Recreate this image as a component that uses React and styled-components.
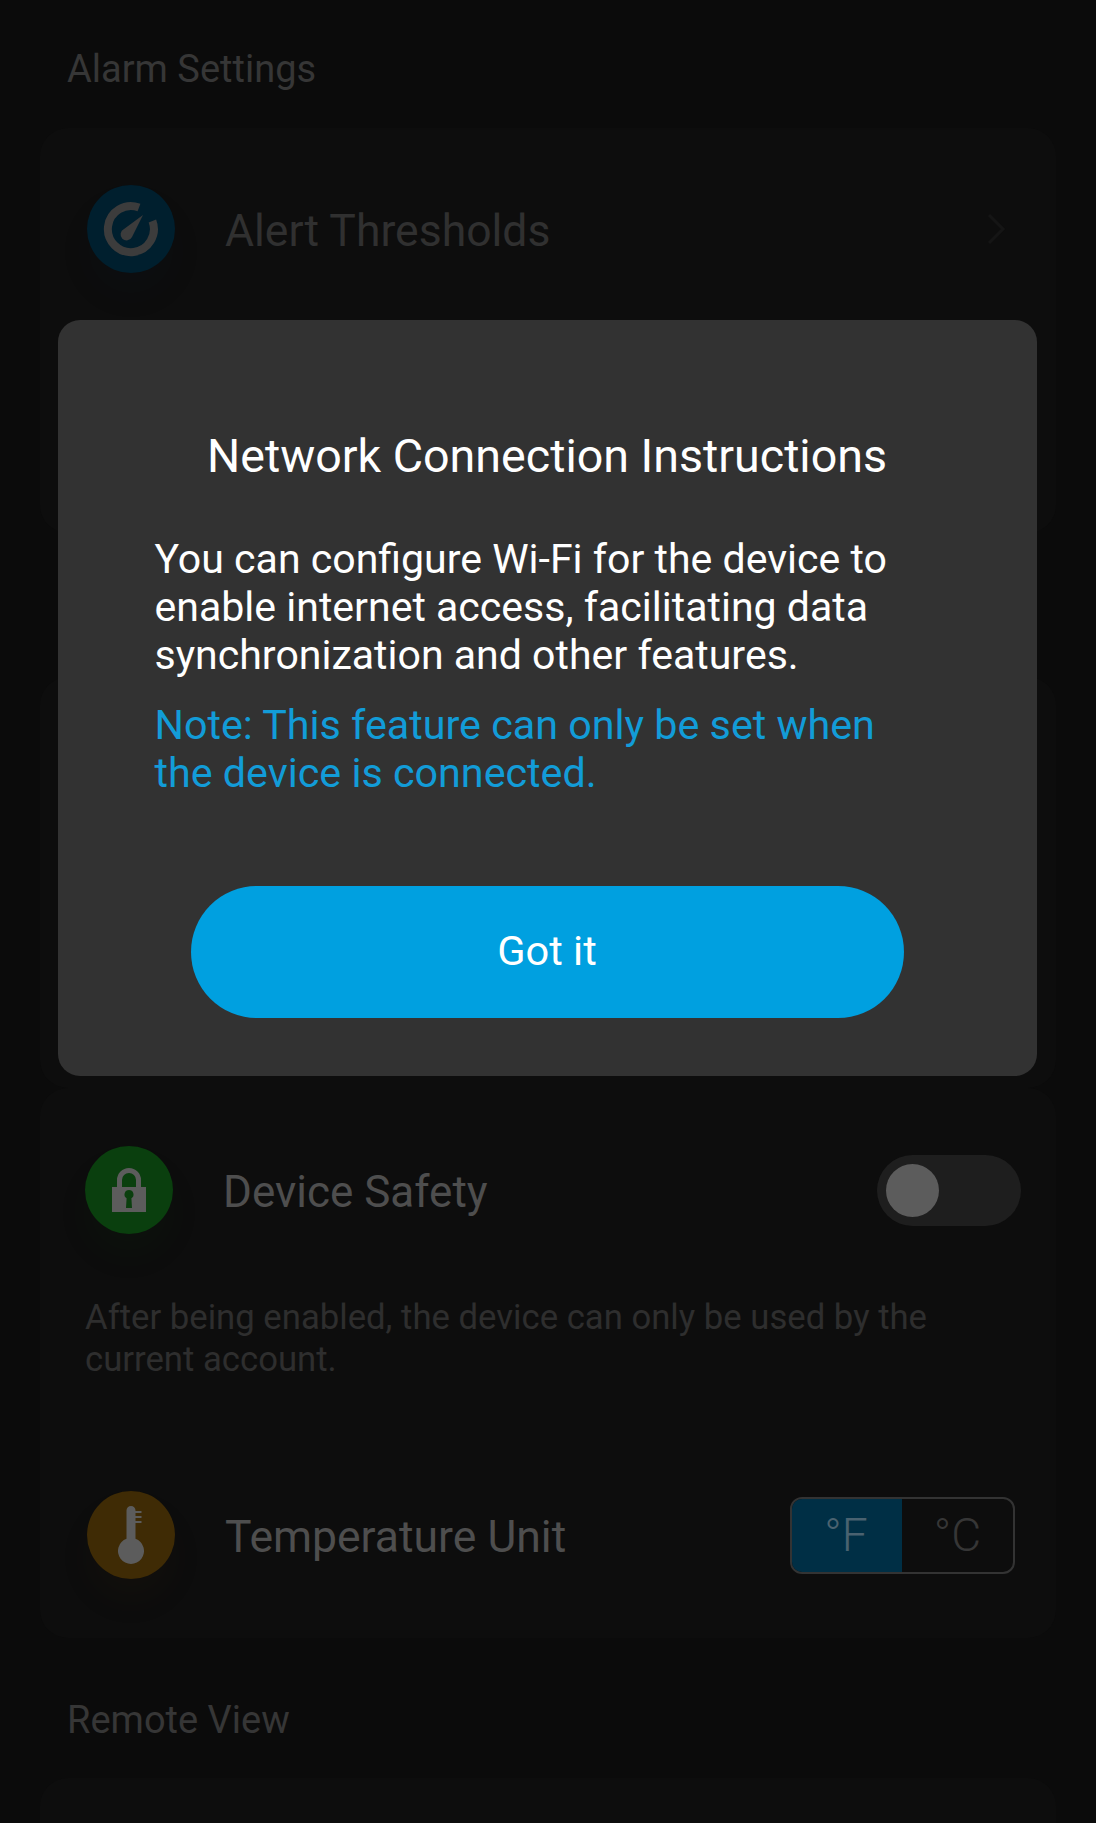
import React from "react";
import styled, { createGlobalStyle } from "styled-components";

const Global = createGlobalStyle`
  html, body { margin: 0; padding: 0; background: #0b0b0b; }
  body { font-family: Roboto, "Noto Sans", sans-serif; overflow: hidden; }
  * { box-sizing: border-box; }
`;

const Page = styled.div`
  position: relative;
  width: 1096px;
  height: 1823px;
  overflow: hidden;
  background: #0b0b0b;
  padding: 46px 40px 0;
`;

const SectionTitle = styled.div`
  font-size: 38px;
  line-height: 46px;
  color: #363636;
  padding-left: 27px;
  margin-top: ${(p) => p.$top || 0}px;
`;

const Card = styled.div`
  background: #0d0d0d;
  border-radius: 28px;
  min-height: ${(p) => p.$height}px;
  margin-top: ${(p) => p.$top || 0}px;
  padding: ${(p) => p.$pad || 0}px 48px 0 47px;
  display: flex;
  flex-direction: column;
`;

const Row = styled.div`
  display: flex;
  align-items: center;
  height: 88px;
  margin-top: ${(p) => p.$top || 0}px;
  margin-left: ${(p) => p.$shift || 0}px;
`;

const IconCircle = styled.div`
  width: 88px;
  height: 88px;
  flex: none;
  border-radius: 50%;
  background: ${(p) => p.$color};
  display: flex;
  align-items: center;
  justify-content: center;
  box-shadow: 0 22px 30px ${(p) => p.$color}14;
`;

const Label = styled.div`
  margin-left: 50px;
  padding-top: 3px;
  flex: 1;
  font-size: ${(p) => p.$size || 44.5}px;
  line-height: 50px;
  color: ${(p) => p.$color || "#4e4e4e"};
`;

const Chevron = styled.svg`
  width: 24px;
  height: 34px;
  flex: none;
`;

const Toggle = styled.div`
  width: 144px;
  height: 71px;
  flex: none;
  border-radius: 36px;
  background: #1e1e1e;
  padding: 9px;
  margin-right: -13px;
`;

const Thumb = styled.div`
  width: 53px;
  height: 53px;
  border-radius: 50%;
  background: #5c5c5c;
`;

const Hint = styled.div`
  margin: 62px 40px 0 -2px;
  font-size: 34.7px;
  line-height: 42px;
  color: #2e2e2e;
`;

const Segment = styled.div`
  display: flex;
  width: 225px;
  height: 77px;
  flex: none;
  border: 2px solid #333;
  border-radius: 12px;
  overflow: hidden;
  margin-right: -7px;
`;

const SegmentItem = styled.div`
  flex: ${(p) => (p.$active ? "0 0 112px" : "1")};
  margin: ${(p) => (p.$active ? "-2px 0 -2px -2px" : 0)};
  background: ${(p) => (p.$active ? "#002f45" : "transparent")};
  color: ${(p) => (p.$active ? "#4a6270" : "#363636")};
  display: flex;
  align-items: center;
  justify-content: center;
  font-size: 46px;
  font-weight: 300;
`;

const Overlay = styled.div`
  position: absolute;
  inset: 0;
  display: flex;
  justify-content: center;
  align-items: flex-start;
  padding: 320px 2px 0 0;
`;

const Modal = styled.div`
  width: 979px;
  height: 756px;
  border-radius: 22px;
  background: #323232;
  padding: 108px 97px 0;
  display: flex;
  flex-direction: column;
`;

const ModalTitle = styled.div`
  font-size: 46.6px;
  line-height: 56px;
  color: #fff;
  text-align: center;
  white-space: nowrap;
`;

const ModalBody = styled.div`
  margin-top: 51px;
  max-width: 760px;
  font-size: 41.05px;
  line-height: 48px;
  color: #fff;
`;

const ModalNote = styled.div`
  margin-top: 22px;
  max-width: 760px;
  font-size: 41.25px;
  line-height: 48px;
  color: #129cd8;
`;

const GotIt = styled.button`
  align-self: center;
  margin: 89px 0 0 0;
  width: 713px;
  height: 132px;
  flex: none;
  border: 0;
  padding: 0 0 4px;
  border-radius: 66px;
  background: #00a0e0;
  color: #fff;
  font-family: inherit;
  font-size: 41.5px;
`;

const Gauge = () => (
  <svg width="56" height="56" viewBox="0 0 56 56" fill="none">
    <path d="M36 6.6A23 23 0 1 0 49.4 20" stroke="#3c3c3c" strokeWidth="8" />
    <path d="M40 14 L21 28 a6 6 0 1 0 8 8 Z" fill="#3c3c3c" />
  </svg>
);

const Lock = () => (
  <svg width="40" height="48" viewBox="0 0 40 48">
    <path d="M10.5 21V14a9.5 9.5 0 0 1 19 0V21" fill="none" stroke="#5c5c5c" strokeWidth="5" />
    <path
      fillRule="evenodd"
      fill="#5c5c5c"
      d="M3 21h34v25H3zM20 24a4.5 4.5 0 0 0-2.4 8.3L17 42h6l-.6-9.7A4.5 4.5 0 0 0 20 24z"
    />
  </svg>
);

const Thermometer = () => (
  <svg width="26" height="58" viewBox="0 0 26 58">
    <path
      fill="#5c5c5c"
      d="M8.5 4.5a4.5 4.5 0 0 1 9 0V5h6v2h-6v3h6v2h-6v3h6v2h-6V32.8a13 13 0 1 1-9 0z"
    />
  </svg>
);

export default function App() {
  return (
    <Page>
      <Global />
      <SectionTitle>Alarm Settings</SectionTitle>
      <Card $height={405} $top={36} $pad={57}>
        <Row>
          <IconCircle $color="#001f2e">
            <Gauge />
          </IconCircle>
          <Label $color="#303030">Alert Thresholds</Label>
          <Chevron viewBox="0 0 24 34" fill="none">
            <path d="M5 3l14 14L5 31" stroke="#151515" strokeWidth="3" />
          </Chevron>
        </Row>
      </Card>
      <Card $height={411} $top={144} />
      <Card $height={550} $pad={58}>
        <Row $shift={-2}>
          <IconCircle $color="#0a3f0e">
            <Lock />
          </IconCircle>
          <Label $size={44}>Device Safety</Label>
          <Toggle>
            <Thumb />
          </Toggle>
        </Row>
        <Hint>After being enabled, the device can only be used by the current account.</Hint>
        <Row $top={111}>
          <IconCircle $color="#3f2b05">
            <Thermometer />
          </IconCircle>
          <Label>Temperature Unit</Label>
          <Segment>
            <SegmentItem $active>°F</SegmentItem>
            <SegmentItem>°C</SegmentItem>
          </Segment>
        </Row>
      </Card>
      <SectionTitle $top={59}>Remote View</SectionTitle>
      <Card $height={80} $top={35} />
      <Overlay>
        <Modal>
          <ModalTitle>Network Connection Instructions</ModalTitle>
          <ModalBody>
            You can configure Wi-Fi for the device to enable internet access, facilitating data
            synchronization and other features.
          </ModalBody>
          <ModalNote>Note: This feature can only be set when the device is connected.</ModalNote>
          <GotIt>Got it</GotIt>
        </Modal>
      </Overlay>
    </Page>
  );
}
